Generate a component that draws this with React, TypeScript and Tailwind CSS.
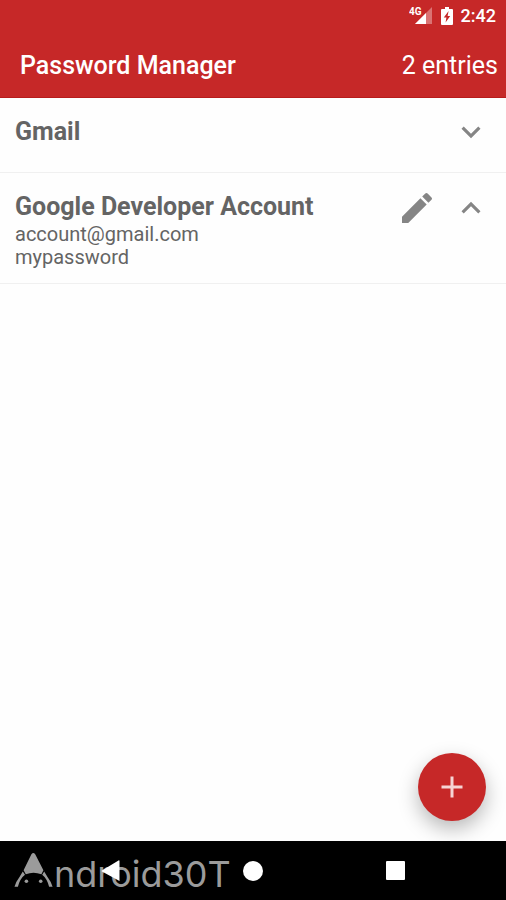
import React, { useState } from 'react'
import { MdAdd, MdEdit, MdExpandLess, MdExpandMore } from 'react-icons/md'

type Entry = {
  title: string
  username: string
  password: string
}

const entries: Entry[] = [
  { title: 'Gmail', username: 'me@gmail.com', password: 'secret' },
  { title: 'Google Developer Account', username: 'account@gmail.com', password: 'mypassword' },
]

function StatusBar() {
  return (
    <div className="flex h-[31px] items-center justify-end pr-[10px]">
      <svg className="mr-2 h-5 w-6" viewBox="0 0 24 20" fill="#fff" aria-label="4G signal">
        <path d="M23 1v17H6z" opacity="0.35" />
        <path d="M17 7v11H6z" />
        <text x="0" y="9" fontFamily="Roboto, sans-serif" fontSize="10" fontWeight="700">
          4G
        </text>
      </svg>
      <svg className="mr-2 h-5 w-3" viewBox="0 0 12 20" aria-label="Battery charging">
        <path fill="#fff" d="M4 1h4v2h3a1 1 0 0 1 1 1v14a1 1 0 0 1-1 1H1a1 1 0 0 1-1-1V4a1 1 0 0 1 1-1h3z" />
        <path fill="#c62828" d="M7.600 5 2.800 11.600h2.600L4.600 16.500 9.200 10H6.600z" />
      </svg>
      <span className="text-lg font-medium">2:42</span>
    </div>
  )
}

function EntryRow({ entry, defaultOpen }: { entry: Entry; defaultOpen: boolean }) {
  const [open, setOpen] = useState(defaultOpen)

  return (
    <li className="flex min-h-[75px] items-start border-b border-[#f0f0f0] pr-4 pb-[14px] pl-[15px]">
      <div className="min-w-0 flex-1 pt-[18px] text-[#646464]">
        <h2 className="text-[25px] leading-8 font-bold">{entry.title}</h2>
        {open && (
          <div className="text-xl leading-[23px]">
            <p>{entry.username}</p>
            <p>{entry.password}</p>
          </div>
        )}
      </div>
      <div className="flex items-center gap-[15px] pt-[15px] text-[#858585]">
        {open && (
          <button type="button" aria-label={`Edit ${entry.title}`}>
            <MdEdit className="size-10" />
          </button>
        )}
        <button
          type="button"
          aria-expanded={open}
          aria-label={`Toggle ${entry.title}`}
          onClick={() => setOpen(!open)}
        >
          {open ? <MdExpandLess className="size-[38px]" /> : <MdExpandMore className="size-[38px]" />}
        </button>
      </div>
    </li>
  )
}

function Watermark() {
  return (
    <div className="pointer-events-none absolute top-3 left-[14px] flex items-start text-[#9b9b9b]">
      {/* Robot head shaped like the letter A */}
      <svg className="h-9 w-10" viewBox="0 0 40 36" fill="currentColor" aria-label="A">
        <path d="M17.400 1.200Q19.300-1 21.200 1.200L29.400 17.200 27.400 21.200Q19.400 18.200 11.800 21.200L9.600 17.200z" />
        <path d="M8.800 18.400 11 21.800Q6 25.500 3.900 33.800H.500Q2 28.500 5.500 24z" />
        <path d="M30.200 18.400 28.200 21.800Q33 25.500 35.100 33.800H38.600Q37 28.500 33.500 24z" />
        <circle cx="12.400" cy="28.300" r="1.800" />
        <circle cx="26.700" cy="28.300" r="1.800" />
      </svg>
      <span className="font-[Inter,sans-serif] text-[36px] leading-[42px]">ndroid30T</span>
    </div>
  )
}

function NavBar() {
  return (
    <nav className="relative h-[59px] bg-black">
      <Watermark />
      <div className="relative grid h-full grid-cols-3 items-center justify-items-center px-10">
        <button type="button" aria-label="Back">
          <svg className="h-[22px] w-5" viewBox="0 0 20 22" fill="#fff">
            <path d="M18.5 1v20L1 11.6Q0 11 1 10.4L17.5.4Q18.500 0 18.500 1z" />
          </svg>
        </button>
        <button type="button" aria-label="Home" className="size-5 rounded-full bg-white" />
        <button type="button" aria-label="Recent apps" className="size-[19px] rounded-[1px] bg-white" />
      </div>
    </nav>
  )
}

export default function App() {
  return (
    <div className="flex min-h-screen flex-col bg-[#fefefe] font-['Roboto',sans-serif]">
      <header className="border-b border-[#b71c1c] bg-[#c62828] text-white">
        <StatusBar />
        <div className="flex h-[66px] items-center justify-between pt-[3px] pr-2 pl-5 text-[25px]">
          <h1 className="font-medium">Password Manager</h1>
          <span>{entries.length} entries</span>
        </div>
      </header>

      <main className="flex flex-1 flex-col justify-between">
        <ul>
          {entries.map((entry, i) => (
            <EntryRow key={entry.title} entry={entry} defaultOpen={i === 1} />
          ))}
        </ul>
        <button
          type="button"
          aria-label="Add entry"
          className="m-5 flex size-[68px] items-center justify-center self-end rounded-full bg-[#c62828] text-[#f6d4d4] shadow-[0_8px_20px_rgba(0,0,0,0.28)]"
        >
          <MdAdd className="size-9" />
        </button>
      </main>

      <NavBar />
    </div>
  )
}
